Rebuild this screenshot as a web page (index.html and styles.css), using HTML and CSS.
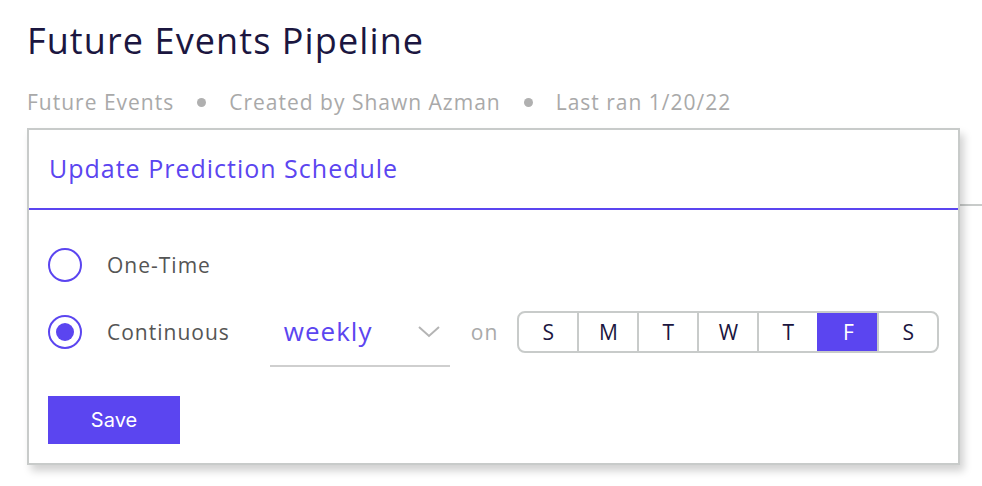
FILE: index.html
```html
<!DOCTYPE html>
<html>
<head>
<meta charset="utf-8">
<link rel="stylesheet" href="styles.css">
</head>
<body>
<div class="page">
  <h1 class="title">Future Events Pipeline</h1>
  <div class="meta">
    <span>Future Events</span>
    <span class="dot"></span>
    <span>Created by Shawn Azman</span>
    <span class="dot"></span>
    <span>Last ran 1/20/22</span>
  </div>
  <div class="tabs"></div>

  <div class="popup">
    <div class="popup-head">Update Prediction Schedule</div>
    <div class="popup-body">
      <div class="row">
        <span class="radio"></span>
        <span class="label">One-Time</span>
      </div>
      <div class="row">
        <span class="radio checked"></span>
        <span class="label">Continuous</span>
        <div class="select">
          <span class="select-value">weekly</span>
          <svg class="chev" width="24" height="14" viewBox="0 0 24 14"><path d="M2 2 L12 11 L22 2" fill="none" stroke="#b4b4b4" stroke-width="2"/></svg>
        </div>
        <span class="on">on</span>
        <div class="days">
          <span class="day">S</span>
          <span class="day">M</span>
          <span class="day">T</span>
          <span class="day">W</span>
          <span class="day">T</span>
          <span class="day active">F</span>
          <span class="day">S</span>
        </div>
      </div>
      <button class="save">Save</button>
    </div>
  </div>
</div>
</body>
</html>
```
FILE: styles.css
```css
* { box-sizing: border-box; }
body {
  margin: 0;
  background: #fff;
  font-family: "Open Sans", "Liberation Sans", sans-serif;
}
.page {
  position: relative;
  padding: 0 0 0 27px;
  height: 486px;
}
.title {
  margin: 0;
  padding-top: 17px;
  font-size: 36px;
  font-weight: 400;
  line-height: 48px;
  color: #1b1640;
  letter-spacing: 1.1px;
}
.meta {
  display: flex;
  align-items: center;
  gap: 23px;
  margin-top: 23px;
  font-size: 21px;
  line-height: 28px;
  letter-spacing: 1px;
  color: #a9a9a9;
}
.dot {
  width: 9px;
  height: 9px;
  border-radius: 50%;
  background: #b0b0b0;
}
.tabs {
  margin-top: 88px;
  border-bottom: 2px solid #c8cbca;
  height: 0;
}
.popup {
  position: absolute;
  left: 27px;
  top: 128px;
  width: 933px;
  height: 337px;
  background: #fff;
  border: 2px solid #c8cbca;
  box-shadow: 4px 6px 8px rgba(0, 0, 0, 0.18);
}
.popup-head {
  height: 80px;
  padding: 21px 0 0 20px;
  font-size: 25px;
  line-height: 34px;
  letter-spacing: 1px;
  color: #5b45f0;
  border-bottom: 2px solid #5b45f0;
}
.popup-body {
  padding: 34px 0 0 19px;
}
.row {
  display: flex;
  align-items: center;
  height: 42px;
  margin-bottom: 25px;
}
.radio {
  width: 34px;
  height: 34px;
  border: 2px solid #5b45f0;
  border-radius: 50%;
  display: flex;
  align-items: center;
  justify-content: center;
  flex: none;
}
.radio.checked::after {
  content: "";
  width: 18px;
  height: 18px;
  border-radius: 50%;
  background: #5b45f0;
}
.label {
  margin-left: 25px;
  font-size: 21px;
  letter-spacing: 1px;
  color: #555;
}
.select {
  margin-left: 40px;
  width: 180px;
  display: flex;
  align-items: center;
  justify-content: space-between;
  padding: 0 9px 0 14px;
  border-bottom: 2px solid #cfcfcf;
  align-self: flex-start;
  height: 56px;
  padding-bottom: 14px;
}
.select-value {
  font-size: 26px;
  letter-spacing: 1px;
  color: #5b45f0;
}
.chev { margin-top: 2px; }
.on {
  margin-left: 21px;
  font-size: 21px;
  letter-spacing: 1px;
  color: #a9a9a9;
}
.days {
  margin-left: 19px;
  display: flex;
  border: 2px solid #c8cbca;
  border-radius: 8px;
  overflow: hidden;
  height: 42px;
}
.day {
  width: 60px;
  display: flex;
  align-items: center;
  justify-content: center;
  font-size: 21px;
  color: #1b1640;
  border-left: 2px solid #c8cbca;
}
.day:first-child { border-left: none; width: 58px; }
.day.active {
  background: #5b45f0;
  color: #fff;
  border-left-color: #5b45f0;
}
.save {
  display: block;
  margin-top: 43px;
  width: 132px;
  height: 48px;
  border: none;
  background: #5b45f0;
  color: #fff;
  font-family: "Inter", "Liberation Sans", sans-serif;
  font-size: 20px;
  padding: 0;
}
```
